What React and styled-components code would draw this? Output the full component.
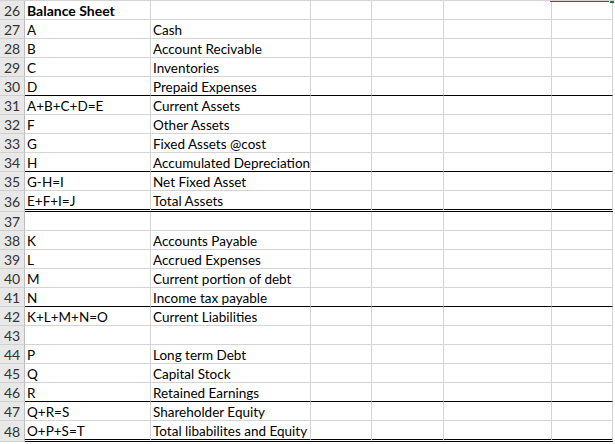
import React from "react";
import styled, { createGlobalStyle } from "styled-components";

const GlobalStyle = createGlobalStyle`
  body {
    margin: 0;
    background: #ffffff;
    font-family: "Lato", "Liberation Sans", sans-serif;
  }
`;

const Sheet = styled.div`
  position: relative;
  width: 615px;
  height: 444px;
  overflow: hidden;
  border-top: 1px solid #d4d4d4;
  box-sizing: border-box;
`;

const Row = styled.div`
  display: grid;
  grid-template-columns: 25px 126px 160px 61px 72px 108px 61px;
  height: ${(p) => (p.$line === "double" ? 21 : 19)}px;
`;

const RowHead = styled.div`
  box-sizing: border-box;
  background: #e8e8e8;
  border-right: 1px solid #bdbdbd;
  border-bottom: 1px solid #d0d0d0;
  color: #333;
  font-size: 14px;
  display: flex;
  align-items: center;
  justify-content: center;
  padding-top: 1px;
`;

const Cell = styled.div`
  box-sizing: border-box;
  border-right: 1px solid #d4d4d4;
  border-bottom: ${(p) =>
    p.$line === "double"
      ? "3px double #000"
      : p.$line === "single"
      ? "1px solid #000"
      : "1px solid #d4d4d4"};
  font-size: ${(p) => (p.$bold ? 14 : 13.5)}px;
  font-weight: ${(p) => (p.$bold ? 700 : 400)};
  color: #000;
  padding: 1px 0 0 2px;
  display: flex;
  align-items: center;
  white-space: nowrap;
  overflow: visible;
`;

const Selection = styled.div`
  position: absolute;
  top: -1px;
  left: 550px;
  width: 59px;
  height: 2px;
  background: #217346;
`;

const FillHandle = styled.div`
  position: absolute;
  top: -1px;
  left: 610px;
  width: 4px;
  height: 3px;
  background: #217346;
`;

const rows = [
  { n: 26, a: "Balance Sheet", bold: true },
  { n: 27, a: "A", b: "Cash" },
  { n: 28, a: "B", b: "Account Recivable" },
  { n: 29, a: "C", b: "Inventories" },
  { n: 30, a: "D", b: "Prepaid Expenses", line: "single" },
  { n: 31, a: "A+B+C+D=E", b: "Current Assets" },
  { n: 32, a: "F", b: "Other Assets" },
  { n: 33, a: "G", b: "Fixed Assets @cost" },
  { n: 34, a: "H", b: "Accumulated Depreciation", line: "single" },
  { n: 35, a: "G-H=I", b: "Net Fixed Asset" },
  { n: 36, a: "E+F+I=J", b: "Total Assets", line: "double" },
  { n: 37 },
  { n: 38, a: "K", b: "Accounts Payable" },
  { n: 39, a: "L", b: "Accrued Expenses" },
  { n: 40, a: "M", b: "Current portion of debt" },
  { n: 41, a: "N", b: "Income tax payable", line: "single" },
  { n: 42, a: "K+L+M+N=O", b: "Current Liabilities" },
  { n: 43 },
  { n: 44, a: "P", b: "Long term Debt" },
  { n: 45, a: "Q", b: "Capital Stock" },
  { n: 46, a: "R", b: "Retained Earnings", line: "single" },
  { n: 47, a: "Q+R=S", b: "Shareholder Equity" },
  { n: 48, a: "O+P+S=T", b: "Total libabilites and Equity", line: "double" },
];

export default function App() {
  return (
    <>
      <GlobalStyle />
      <Sheet>
        {rows.map((r) => (
          <Row key={r.n} $line={r.line}>
            <RowHead>{r.n}</RowHead>
            <Cell $line={r.line} $bold={r.bold}>{r.a}</Cell>
            <Cell $line={r.line}>{r.b}</Cell>
            <Cell $line={r.line} />
            <Cell $line={r.line} />
            <Cell $line={r.line} />
            <Cell $line={r.line} />
          </Row>
        ))}
        <Selection />
        <FillHandle />
      </Sheet>
    </>
  );
}
